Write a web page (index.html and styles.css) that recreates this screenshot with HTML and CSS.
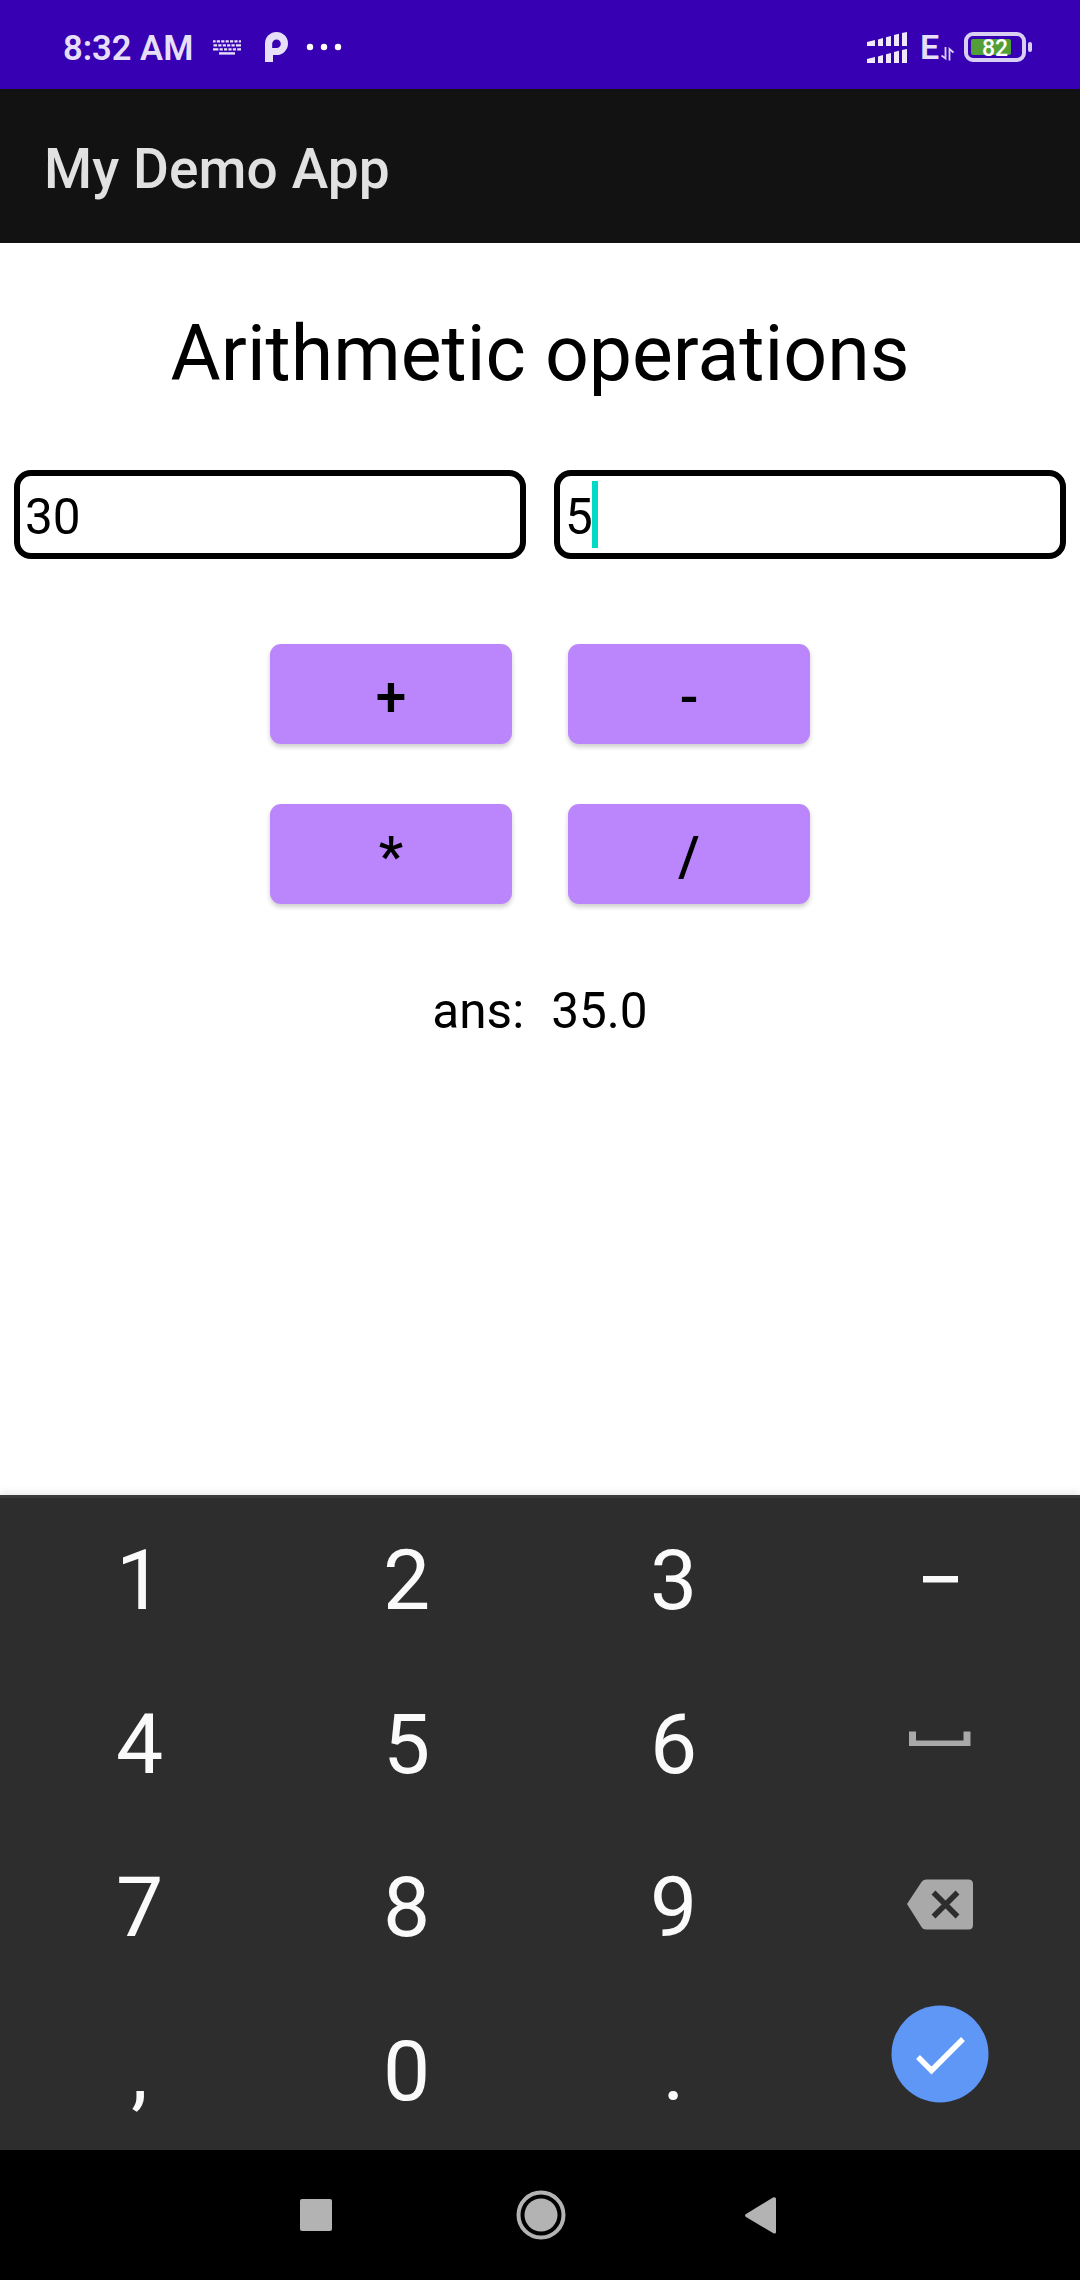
FILE: index.html
```html
<!DOCTYPE html>
<html lang="en">
<head>
<meta charset="utf-8">
<title>My Demo App</title>
<link rel="stylesheet" href="styles.css">
</head>
<body>
<header class="status">
  <span class="clock">8:32 AM</span>
  <svg class="ic-keyboard" width="28" height="15" viewBox="0 0 28 15"><g fill="none" stroke="#e6dff7" stroke-width="2.4"><path d="M0 1.4H28" stroke-dasharray="2.6 1.2 3.2 1.2 3.2 1.2 3.2 1.2 3.2 1.2 3.2 1.2 5"/><path d="M0.5 5.4H28" stroke-dasharray="3.6 1.2 3.2 1.2 3.2 1.2 3.2 1.2 3.2 1.2 6"/><path d="M0 9.4H28" stroke-dasharray="5.4 1.2 3.2 1.2 3.2 1.2 3.2 1.2 3.2 1.2 6"/><path d="M6 13.4H22"/></g></svg>
  <svg class="ic-p" width="23" height="30" viewBox="0 0 23 30"><path fill="#e6dff7" fill-rule="evenodd" d="M0 30V11.5A11.5 11.5 0 1 1 11.5 23H8V30ZM8 16H11.5A4.3 4.3 0 1 0 7.2 11.7V16Z"/></svg>
  <svg class="ic-dots" width="36" height="8" viewBox="0 0 36 8" fill="#fff"><circle cx="4" cy="4" r="3.2"/><circle cx="18" cy="4" r="3.2"/><circle cx="32" cy="4" r="3.2"/></svg>
  <svg class="ic-signal" width="41" height="32" viewBox="0 0 41 32" fill="#efe9fb"><path id="bars" d="M0 10L8 8V14H0ZM11 7.5L16 6V14H11ZM19 5.2L24 4V14H19ZM27 3L32 1.700V14H27ZM35 1L40 0V14H35Z"/><use href="#bars" y="17"/></svg>
  <span class="net">E</span>
  <svg class="ic-data" width="13" height="14" viewBox="0 0 13 14" fill="none" stroke="#d9cff4" stroke-width="1.8"><path d="M4.500 0V11.500L0.500 8.500M8.500 13.500V2L12.500 5.500"/></svg>
  <div class="battery"><span class="level"></span><span class="pct">82</span></div>
  <span class="tip"></span>
</header>
<div class="appbar">My Demo App</div>
<main class="content">
  <h1>Arithmetic operations</h1>
  <div class="inputs">
    <div class="field">30</div>
    <div class="field">5<span class="caret"></span></div>
  </div>
  <div class="ops">
    <button>+</button><button>-</button>
    <button>*</button><button>/</button>
  </div>
  <div class="answer"><span>ans:</span><span>35.0</span></div>
</main>
<section class="keyboard">
  <div class="key">1</div><div class="key">2</div><div class="key">3</div>
  <div class="key"><svg width="98" height="98" viewBox="0 0 98 98"><path fill="#fafafa" d="M32 47h35v6.500H32z"/></svg></div>
  <div class="key">4</div><div class="key">5</div><div class="key">6</div>
  <div class="key"><svg width="98" height="98" viewBox="0 0 98 98"><path fill="#a9a9a9" d="M18 39.500h7v9h47.500v-9h7v14.500H18z"/></svg></div>
  <div class="key">7</div><div class="key">8</div><div class="key">9</div>
  <div class="key"><svg width="98" height="98" viewBox="0 0 98 98"><path fill="#a9a9a9" d="M16 48L30.500 26Q32 23.500 35 23.500H77.500Q82 23.500 82 28V69Q82 73.500 77.500 73.500H35Q32 73.500 30.500 71Z"/><path fill="none" stroke="#2d2d2d" stroke-width="5.500" d="M42.500 36.500L66.500 60.500M66.500 36.500L42.500 60.500"/></svg></div>
  <div class="key">,</div><div class="key">0</div><div class="key">.</div>
  <div class="key enter"><svg width="98" height="98" viewBox="0 0 98 98"><circle cx="49" cy="49" r="48.500" fill="#5e97f6"/><path fill="none" stroke="#fff" stroke-width="5.500" d="M27 52L40.500 65.500L72 34"/></svg></div>
</section>
<nav class="nav">
  <svg width="32" height="32" viewBox="0 0 32 32"><rect width="32" height="32" rx="2" fill="#b3b3b3"/></svg>
  <svg width="50" height="50" viewBox="0 0 50 50"><circle cx="25" cy="25" r="22.500" fill="none" stroke="#b3b3b3" stroke-width="4"/><circle cx="25" cy="25" r="16.500" fill="#b3b3b3"/></svg>
  <svg width="31" height="37" viewBox="0 0 31 37"><path fill="#b3b3b3" d="M1 17L28 0.500Q31 -0.500 31 2V35Q31 37.500 28 36L1 20Q-1 18.500 1 17Z"/></svg>
</nav>
</body>
</html>
```

FILE: styles.css
```css
* { box-sizing: border-box; }
body {
  margin: 0;
  width: 1080px;
  height: 2280px;
  display: flex;
  flex-direction: column;
  overflow: hidden;
  background: #fff;
  color: #000;
  font-family: Roboto, "Liberation Sans", sans-serif;
}
svg { display: block; flex: none; }

.status {
  height: 89px;
  flex: none;
  display: flex;
  align-items: flex-start;
  padding-left: 63px;
  background: #3700b3;
  color: #e6dff7;
}
.clock {
  width: 150px;
  margin-top: 28px;
  font-size: 34.5px;
  line-height: 40px;
  font-weight: 600;
  white-space: nowrap;
}
.ic-keyboard { margin-top: 40px; }
.ic-p { margin: 32px 0 0 24px; }
.ic-dots { margin: 43px 0 0 18px; }
.ic-signal { margin: 32px 0 0 525px; }
.net {
  width: 20px;
  margin: 27px 0 0 12px;
  font-size: 34px;
  line-height: 40px;
  font-weight: 600;
}
.ic-data { margin: 47px 0 0 1px; }
.battery {
  position: relative;
  width: 62px;
  height: 30px;
  margin: 32px 0 0 10px;
  padding: 3px;
  border: 4px solid #d9cff5;
  border-radius: 9px;
}
.level {
  display: block;
  width: 40px;
  height: 16px;
  border-radius: 2px;
  background: #529f37;
}
.pct {
  position: absolute;
  inset: 0;
  line-height: 25px;
  font-size: 23px;
  font-weight: 500;
  text-align: center;
  color: #fff;
}
.tip {
  width: 4px;
  height: 10px;
  margin: 42px 0 0 2px;
  border-radius: 2px;
  background: #d9cff5;
}

.appbar {
  height: 154px;
  flex: none;
  padding: 3px 44px 0;
  line-height: 154px;
  background: #121212;
  color: #e1e1e1;
  font-size: 55px;
  font-weight: 500;
  letter-spacing: 0.1px;
}

.content {
  height: 1252px;
  flex: none;
  display: flex;
  flex-direction: column;
  align-items: center;
}
h1 {
  margin: 66px 0 0;
  font-size: 77px;
  font-weight: 400;
  line-height: 90px;
}
.inputs {
  width: 100%;
  display: grid;
  grid-template-columns: 1fr 1fr;
  gap: 28px;
  padding: 0 14px;
  margin-top: 71px;
}
.field {
  display: flex;
  height: 89px;
  padding: 5px;
  border: 6px solid #000;
  border-radius: 17px;
  font-size: 49.5px;
  line-height: 72px;
}
.caret {
  width: 6px;
  height: 67px;
  margin-left: -1px;
  background: #03dac5;
}
.ops {
  display: grid;
  grid-template-columns: 242px 242px;
  gap: 60px 56px;
  margin-top: 85px;
}
button {
  height: 100px;
  padding: 6px 0 0;
  border: 0;
  border-radius: 11px;
  background: #bb86fc;
  box-shadow: 0 3px 5px rgba(0, 0, 0, .2);
  color: #000;
  font-family: inherit;
  font-size: 55px;
  font-weight: 500;
}
.answer {
  display: flex;
  gap: 27px;
  margin-top: 78px;
  font-size: 49.5px;
  line-height: 58px;
}

.keyboard {
  height: 655px;
  flex: none;
  display: grid;
  grid-template-columns: repeat(4, 267px);
  grid-auto-rows: 163.5px;
  justify-content: center;
  border-top: 3px solid #373a38;
  background: #2d2d2d;
  color: #fafafa;
  font-size: 84px;
  box-shadow: 0 -2px 8px rgba(0, 0, 0, .1);
}
.key {
  display: flex;
  align-items: center;
  justify-content: center;
  padding-top: 2px;
}
.key svg { margin: 0 1px 6px 0; }
.enter { padding: 0 0 27px; }

.nav {
  flex: 1;
  display: flex;
  align-items: center;
  padding-left: 300px;
  background: #000;
}
.nav svg:nth-child(2) { margin-left: 183.5px; }
.nav svg:nth-child(3) { margin-left: 179.5px; }
```
